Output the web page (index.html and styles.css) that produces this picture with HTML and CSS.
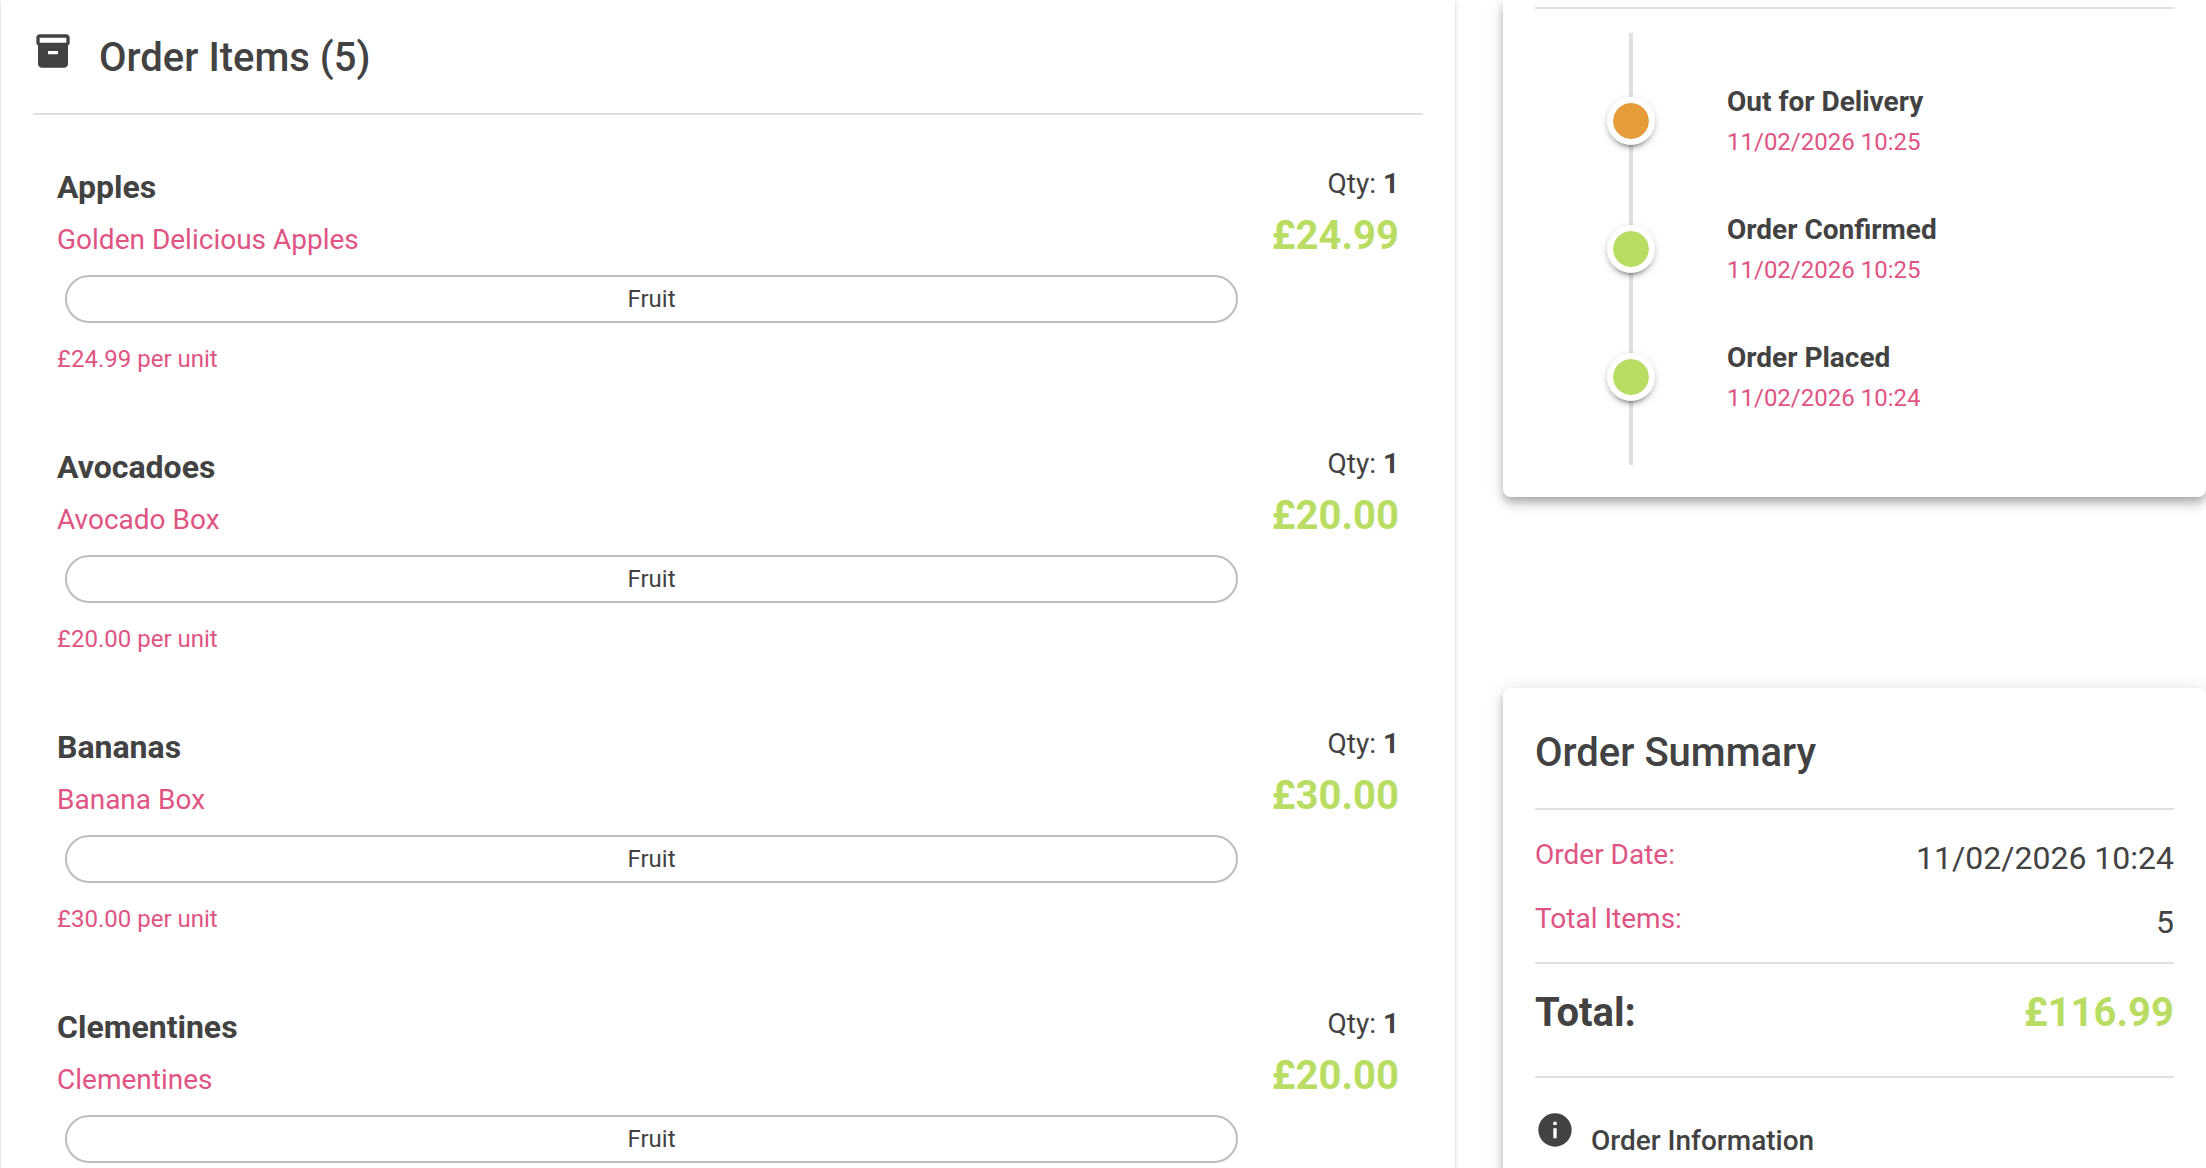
FILE: index.html
```
<!DOCTYPE html>
<html lang="en">
<head>
    <meta charset="UTF-8">
    <meta name="viewport" content="width=device-width, initial-scale=1.0">
    <title>Order Details</title>
    <link rel="stylesheet" href="styles.css">
</head>
<body>
    <main class="page">
        <section class="card items-card">
            <div class="items-header">
                <svg class="icon" viewBox="0 0 24 24" aria-hidden="true">
                    <path d="M20 2H4c-1 0-2 .9-2 2v3.01c0 .72.43 1.34 1 1.69V20c0 1.1 1.1 2 2 2h14c.9 0 2-.9 2-2V8.7c.57-.35 1-.97 1-1.69V4c0-1.1-1-2-2-2zm-5 12H9v-2h6v2zm5-7H4V4l16-.02V7z"/>
                </svg>
                <h2 class="title">Order Items (5)</h2>
            </div>

            <ul class="items">
                <li class="item">
                    <div class="item-info">
                        <h3 class="item-name">Apples</h3>
                        <p class="item-desc">Golden Delicious Apples</p>
                        <div class="chip">Fruit</div>
                        <p class="item-unit">£24.99 per unit</p>
                    </div>
                    <div class="item-amount">
                        <p class="qty">Qty: <strong>1</strong></p>
                        <p class="price">£24.99</p>
                    </div>
                </li>
                <li class="item">
                    <div class="item-info">
                        <h3 class="item-name">Avocadoes</h3>
                        <p class="item-desc">Avocado Box</p>
                        <div class="chip">Fruit</div>
                        <p class="item-unit">£20.00 per unit</p>
                    </div>
                    <div class="item-amount">
                        <p class="qty">Qty: <strong>1</strong></p>
                        <p class="price">£20.00</p>
                    </div>
                </li>
                <li class="item">
                    <div class="item-info">
                        <h3 class="item-name">Bananas</h3>
                        <p class="item-desc">Banana Box</p>
                        <div class="chip">Fruit</div>
                        <p class="item-unit">£30.00 per unit</p>
                    </div>
                    <div class="item-amount">
                        <p class="qty">Qty: <strong>1</strong></p>
                        <p class="price">£30.00</p>
                    </div>
                </li>
                <li class="item">
                    <div class="item-info">
                        <h3 class="item-name">Clementines</h3>
                        <p class="item-desc">Clementines</p>
                        <div class="chip">Fruit</div>
                    </div>
                    <div class="item-amount">
                        <p class="qty">Qty: <strong>1</strong></p>
                        <p class="price">£20.00</p>
                    </div>
                </li>
            </ul>
        </section>

        <aside class="sidebar">
            <section class="card status-card">
                <hr class="divider">
                <ol class="timeline">
                    <li class="step">
                        <span class="dot dot-active"></span>
                        <div class="step-text">
                            <h3 class="step-name">Out for Delivery</h3>
                            <p class="step-date">11/02/2026 10:25</p>
                        </div>
                    </li>
                    <li class="step">
                        <span class="dot"></span>
                        <div class="step-text">
                            <h3 class="step-name">Order Confirmed</h3>
                            <p class="step-date">11/02/2026 10:25</p>
                        </div>
                    </li>
                    <li class="step">
                        <span class="dot"></span>
                        <div class="step-text">
                            <h3 class="step-name">Order Placed</h3>
                            <p class="step-date">11/02/2026 10:24</p>
                        </div>
                    </li>
                </ol>
            </section>

            <section class="card summary-card">
                <h2 class="title">Order Summary</h2>
                <dl class="summary">
                    <div class="summary-row">
                        <dt>Order Date:</dt>
                        <dd>11/02/2026 10:24</dd>
                    </div>
                    <div class="summary-row">
                        <dt>Total Items:</dt>
                        <dd>5</dd>
                    </div>
                    <div class="summary-row total-row">
                        <dt>Total:</dt>
                        <dd>£116.99</dd>
                    </div>
                </dl>
                <div class="info">
                    <svg class="icon" viewBox="0 0 24 24" aria-hidden="true">
                        <path d="M12 2C6.480 2 2 6.480 2 12s4.480 10 10 10 10-4.480 10-10S17.520 2 12 2zm1 15h-2v-6h2v6zm0-8h-2V7h2v2z"/>
                    </svg>
                    <h3 class="info-title">Order Information</h3>
                </div>
            </section>
        </aside>
    </main>
</body>
</html>
```
FILE: styles.css
```
* {
    box-sizing: border-box;
}
body {
    margin: 0;
    height: 100vh;
    overflow: hidden;
    background-color: #fff;
    color: #424242;
    font-family: Roboto, Arial, sans-serif;
    font-size: 28px;
    line-height: 42px;
}
h2, h3, p, ul, ol, dl, dd {
    margin: 0;
    padding: 0;
}
ul, ol {
    list-style: none;
}
.page {
    display: grid;
    grid-template-columns: repeat(12, minmax(0, 1fr));
    column-gap: 48px;
    min-height: 100vh;
    padding-left: 1px;
}
.card {
    background-color: #fff;
}
.title {
    font-size: 40px;
    font-weight: 500;
    line-height: 66px;
}
.icon {
    width: 40px;
    height: 40px;
    flex-shrink: 0;
    fill: currentColor;
}

/* order items */
.items-card {
    grid-column: span 8;
    padding: 25px 32px 0;
    box-shadow: 0 4px 2px -2px rgba(0, 0, 0, 0.2), 0 2px 2px rgba(0, 0, 0, 0.14), 0 2px 6px rgba(0, 0, 0, 0.12);
}
.items-header {
    display: flex;
    gap: 26px;
    padding-bottom: 22px;
    margin-bottom: 16px;
    border-bottom: 2px solid #e0e0e0;
}
.items-header .icon {
    margin-top: 6px;
}
.item {
    display: flex;
    padding: 32px 24px;
}
.item-info {
    flex: 1;
}
.item-name {
    font-size: 32px;
    font-weight: 700;
    line-height: 48px;
    margin-bottom: 8px;
}
.item-desc {
    color: #e05483;
}
.chip {
    height: 48px;
    margin: 14px 8px 16px;
    border: 2px solid #bdbdbd;
    border-radius: 24px;
    font-size: 24px;
    line-height: 44px;
    text-align: center;
}
.item-unit {
    color: #e05483;
    font-size: 24px;
    line-height: 40px;
}
.item-amount {
    width: 153px;
    text-align: right;
}
.price {
    color: #b9dd63;
    font-size: 40px;
    font-weight: 700;
    line-height: 62px;
}

/* right column */
.sidebar {
    grid-column: span 4;
}
.status-card {
    padding: 7px 32px 32px;
    border-radius: 0 0 8px 8px;
}
.status-card, .summary-card {
    box-shadow: 0 4px 8px -2px rgba(0, 0, 0, 0.2), 0 8px 10px rgba(0, 0, 0, 0.14), 0 2px 20px rgba(0, 0, 0, 0.12);
}
.divider {
    height: 2px;
    margin: 0 0 24px;
    border: 0;
    background-color: #e0e0e0;
}
.timeline {
    padding: 24px 0 24px 72px;
    background: linear-gradient(#e0e0e0, #e0e0e0) 94px 0 / 4px 100% no-repeat;
}
.step {
    display: flex;
    align-items: center;
    gap: 72px;
    height: 128px;
}
.dot {
    width: 48px;
    height: 48px;
    border: 6px solid #fff;
    border-radius: 50%;
    background-color: #b9dd63;
    background-clip: padding-box;
    box-shadow: 0 6px 2px -4px rgba(0, 0, 0, 0.2), 0 4px 4px rgba(0, 0, 0, 0.14), 0 2px 10px rgba(0, 0, 0, 0.12);
}
.dot-active {
    background-color: #e69c3a;
}
.step-name {
    font-size: 28px;
    font-weight: 700;
}
.step-date {
    color: #e05483;
    font-size: 24px;
    line-height: 38px;
}

/* order summary */
.summary-card {
    margin-top: 191px;
    padding: 32px;
    border-radius: 8px;
}
.summary {
    margin-top: 22px;
    padding: 24px 0 30px;
    border-top: 2px solid #e0e0e0;
    border-bottom: 2px solid #e0e0e0;
}
.summary-row {
    display: flex;
    justify-content: space-between;
    margin-bottom: 16px;
}
.summary-row dt {
    color: #e05483;
}
.summary-row dd {
    font-size: 32px;
    line-height: 48px;
}
.total-row {
    margin-bottom: 0;
    padding-top: 16px;
    border-top: 2px solid #e0e0e0;
}
.total-row dt, .total-row dd {
    font-size: 40px;
    font-weight: 700;
    line-height: 66px;
}
.total-row dt {
    color: #424242;
}
.total-row dd {
    color: #b9dd63;
}
.info {
    display: flex;
    gap: 16px;
    padding-top: 32px;
}
.info-title {
    font-size: 28px;
    font-weight: 500;
    line-height: 62px;
}
```
